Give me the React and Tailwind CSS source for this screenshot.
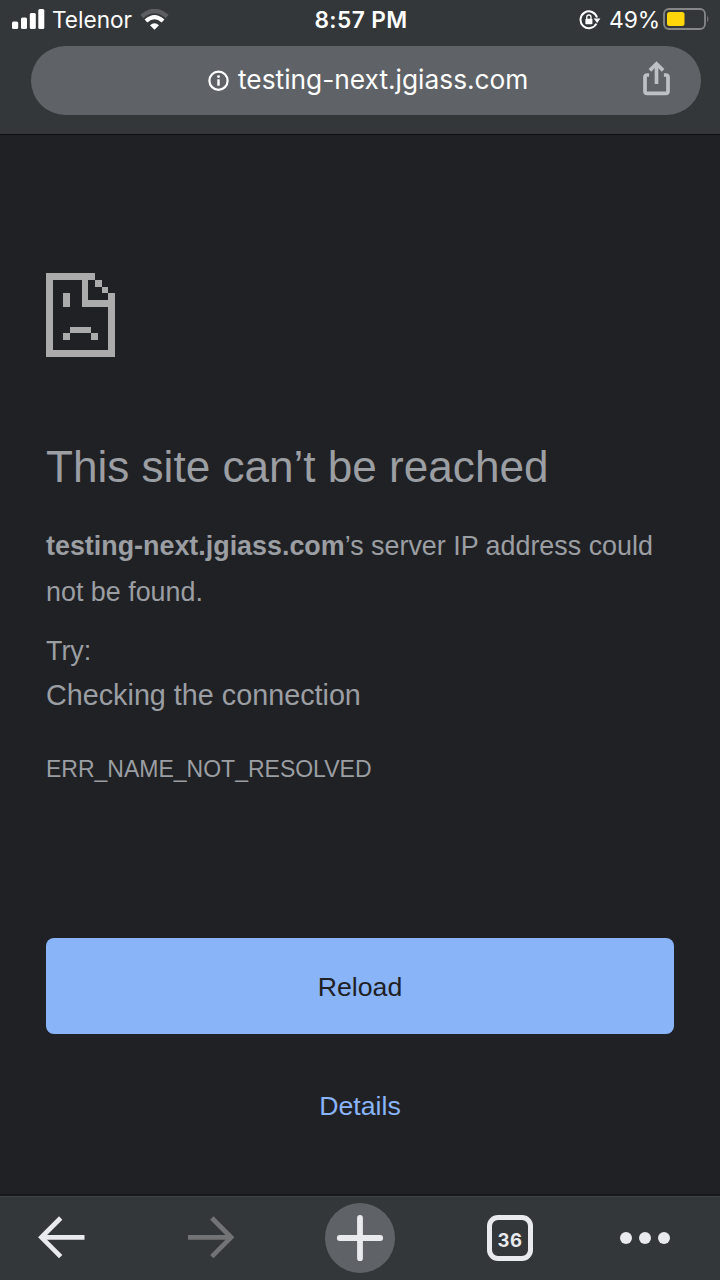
function StatusBar() {
  return (
    <div className="flex h-[40px] items-center justify-between pl-3 pr-[10px] text-[22.6px] leading-[40px] text-white">
      <div className="flex w-[260px] items-center">
        <svg width="33" height="22" viewBox="0 0 33 22" fill="#fff">
          <rect x="0" y="12.5" width="6.2" height="7.5" rx="1.5" />
          <rect x="9" y="8.5" width="6" height="11.5" rx="1.5" />
          <rect x="17.8" y="4" width="6" height="16" rx="1.5" />
          <rect x="26.3" y="0" width="6" height="20" rx="1.5" />
        </svg>
        <span className="ml-[7px] w-[80px] whitespace-nowrap">Telenor</span>
        <svg className="ml-[8px]" width="29" height="22" viewBox="0 0 29 22" fill="none">
          <path d="M1.8 7.5 Q14.5 -3.5 27.2 7.5" stroke="#5c5e60" strokeWidth="4.4" />
          <path d="M6 12 Q14.5 4.2 23 12" stroke="#fff" strokeWidth="4.2" />
          <path d="M10 16.2 Q14.5 12.2 19 16.2 L14.5 20.8 Z" fill="#fff" />
        </svg>
      </div>
      <div className="w-[162px] whitespace-nowrap text-center text-[22.7px] font-semibold tracking-[0.4px]">8:57 PM</div>
      <div className="flex w-[260px] items-center justify-end">
        <svg width="22" height="20" viewBox="0 0 22 20" fill="none">
          <path d="M17.4 13.6 A8.4 8.4 0 1 1 18 7.5" stroke="#fff" strokeWidth="2" />
          <path d="M14.6 8.5 L21.4 8.5 L18.2 13 Z" fill="#fff" />
          <rect x="6.4" y="8.8" width="7" height="5.4" rx="0.8" fill="#fff" />
          <path d="M7.8 9.3 V7.1 A2.1 2.1 0 0 1 12 7.1 V9.3" stroke="#fff" strokeWidth="1.3" />
        </svg>
        <span className="ml-[8px] w-[50px] whitespace-nowrap text-[22.8px]">49%</span>
        <svg className="-mt-[2px] ml-[4px]" width="47" height="22" viewBox="0 0 47 22" fill="none">
          <rect x="1" y="1" width="41" height="20" rx="5" stroke="#858789" strokeWidth="1.8" />
          <rect x="4" y="4" width="17.5" height="14" rx="2.5" fill="#ffd60a" />
          <path d="M44.3 7.5 Q46.5 11 44.3 14.5 Z" fill="#858789" />
        </svg>
      </div>
    </div>
  );
}

function AddressBar() {
  return (
    <div className="ml-[31px] mr-[19px] mt-[6px] flex h-[69px] items-center rounded-full bg-[#5f6368]">
      <svg className="ml-[177px]" width="21" height="22" viewBox="0 0 21 22" fill="none">
        <circle cx="10.5" cy="10.7" r="9.1" stroke="#fff" strokeWidth="2.2" />
        <circle cx="10.5" cy="6.6" r="1.4" fill="#fff" />
        <path d="M10.5 9.3 V15.7" stroke="#fff" strokeWidth="2.4" />
      </svg>
      <span className="-mt-[2px] ml-[9px] w-[290px] whitespace-nowrap text-[26.3px] leading-[68px] text-white">testing-next.jgiass.com</span>
      <svg className="-mt-[5px] ml-[114px]" width="28" height="36" viewBox="0 0 28 36" fill="none" stroke="#bdc1c6" strokeWidth="3.7">
        <path d="M7.1 15 H5.3 Q3 15 3 17 V31.3 Q3 33.4 5.1 33.4 H23.9 Q26 33.4 26 31.3 V17 Q26 15 23.7 15 H21.9" />
        <path d="M14.5 24 V4" />
        <path d="M7.9 10.4 L14.5 3.8 L21.1 10.4" />
      </svg>
    </div>
  );
}

function SadPage() {
  return (
    <svg width="70" height="84" viewBox="0 0 70 84" fill="#ababab" shapeRendering="crispEdges">
      <path d="M0 0 H49 V7 H42 V27 H62 V20 H69 V84 H0 Z M7 7 V77 H62 V34 H36 V7 Z" fillRule="evenodd" />
      <rect x="49" y="7" width="7" height="7" />
      <rect x="56" y="14" width="6" height="6" />
      <rect x="17" y="20" width="7" height="14" />
      <rect x="24" y="54" width="21" height="6" />
      <rect x="17" y="60" width="7" height="7" />
      <rect x="45" y="60" width="7" height="7" />
    </svg>
  );
}

function Toolbar() {
  return (
    <nav className="flex h-[86px] items-start border-t-2 border-[#17181a] bg-[#343739] shadow-[inset_0_1px_0_#414346]">
      <svg className="ml-[38px] mt-[19px]" width="47" height="44" viewBox="0 0 47 44" fill="none" stroke="#e8eaed" strokeWidth="4.7">
        <path d="M46.5 22.3 H5" />
        <path d="M22.7 3 L3.4 22.3 L22.7 41.6" />
      </svg>
      <svg className="ml-[103px] mt-[19px]" width="47" height="44" viewBox="0 0 47 44" fill="none" stroke="#717375" strokeWidth="4.7">
        <path d="M0 22.3 H42" />
        <path d="M23.8 3 L43.1 22.3 L23.8 41.6" />
      </svg>
      <div className="ml-[90px] mt-[7px] flex size-[70px] items-center justify-center rounded-full bg-[#5f6368]">
        <svg width="48" height="48" viewBox="0 0 48 48" stroke="#e8eaed" strokeWidth="5.8" strokeLinecap="round">
          <path d="M24 3.8 V44.2 M3.8 24 H44.2" />
        </svg>
      </div>
      <div className="ml-[92px] mt-[19px] flex size-[46px] items-center justify-center rounded-[11px] border-[5px] border-[#e8eaed] pt-[4px] text-[18.5px] font-bold leading-none tracking-[0.5px] text-[#e8eaed]">
        36
      </div>
      <div className="ml-[87px] mt-[36px] flex gap-[7px]">
        <span className="size-[12px] rounded-full bg-[#e8eaed]" />
        <span className="size-[12px] rounded-full bg-[#e8eaed]" />
        <span className="size-[12px] rounded-full bg-[#e8eaed]" />
      </div>
    </nav>
  );
}

export default function App() {
  return (
    <div className="flex h-[1280px] w-[720px] flex-col overflow-hidden bg-[#202124] font-['Inter',sans-serif]">
      <header className="h-[135px] border-b border-[#0c0d0f] bg-[#343739]">
        <StatusBar />
        <AddressBar />
      </header>
      <main className="flex flex-1 flex-col px-[46px] pt-[138px] font-['Liberation_Sans',sans-serif] text-[26.88px] text-[#9b9ea3]">
        <SadPage />
        <h1 className="mt-[82px] whitespace-nowrap text-[44.1px] leading-[56px]">This site can’t be reached</h1>
        <p className="mt-[28px] whitespace-nowrap leading-[46px]">
          <strong className="font-bold">testing-next.jgiass.com</strong>’s server IP address could
          <br />
          not be found.
        </p>
        <p className="mt-[15px] leading-[43px]">Try:</p>
        <p className="text-[28.75px] leading-[44px]">Checking the connection</p>
        <p className="mt-[34px] text-[23px] leading-[36px]">ERR_NAME_NOT_RESOLVED</p>
        <button className="mt-[151px] h-[96px] w-[628px] rounded-[8px] bg-[#8ab4f8] pt-[2px] text-[26.7px] text-[#202124]">Reload</button>
        <button className="mt-[48px] h-[48px] self-center text-[26.7px] leading-[48px] text-[#8ab4f8]">Details</button>
      </main>
      <Toolbar />
    </div>
  );
}
